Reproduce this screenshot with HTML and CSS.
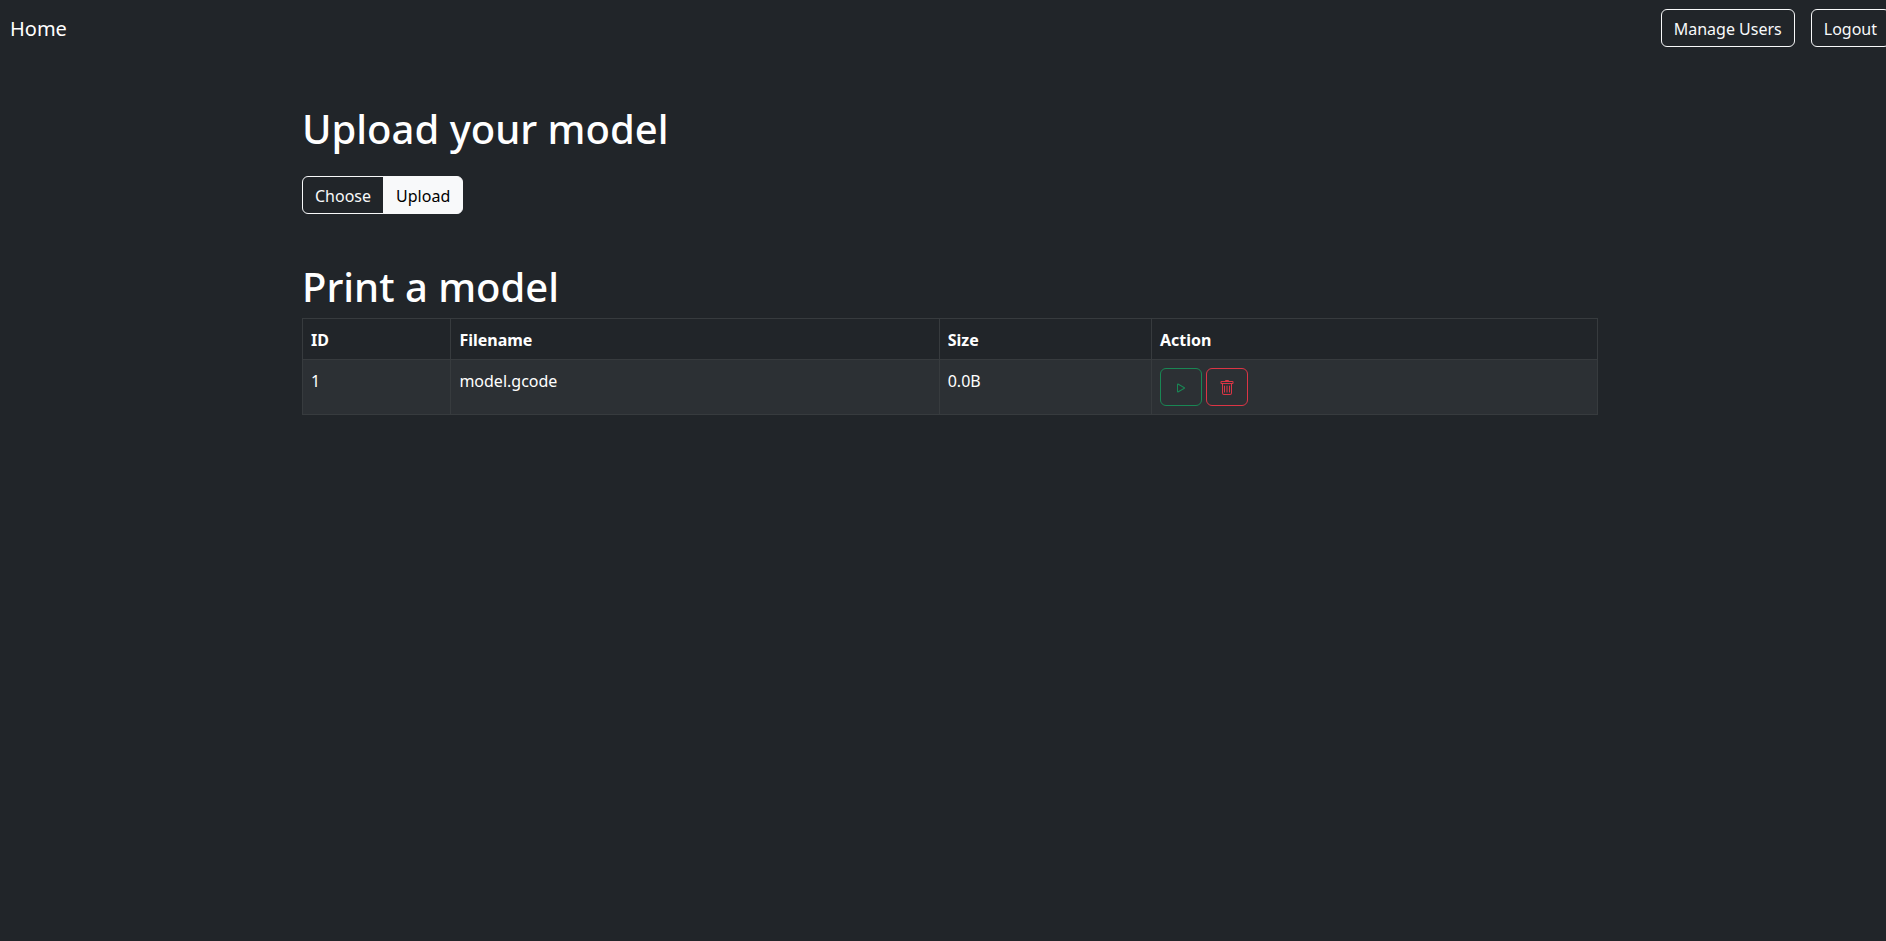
FILE: index.html
```html
<!DOCTYPE html>
<html lang="en">
<head>
<meta charset="utf-8">
<meta name="viewport" content="width=device-width, initial-scale=1">
<title>Print a model</title>
<link rel="stylesheet" href="styles.css">
</head>
<body>
<header class="navbar">
  <a class="brand" href="#">Home</a>
  <nav class="nav-actions">
    <a class="btn btn-light" href="#">Manage Users</a>
    <a class="btn btn-light" href="#">Logout</a>
  </nav>
</header>
<main class="container">
  <section class="section">
    <h1 class="title">Upload your model</h1>
    <form class="btn-group">
      <button class="btn btn-light" type="button">Choose</button>
      <button class="btn btn-solid" type="button">Upload</button>
    </form>
  </section>
  <section class="section">
    <h1 class="title">Print a model</h1>
    <table class="table">
      <thead>
        <tr><th scope="col">ID</th><th scope="col">Filename</th><th scope="col">Size</th><th scope="col">Action</th></tr>
      </thead>
      <tbody>
        <tr>
          <td>1</td>
          <td>model.gcode</td>
          <td>0.0B</td>
          <td class="actions">
            <div class="row-actions">
              <button class="btn btn-success" type="button" aria-label="Print">
                <svg class="icon" viewBox="0 0 16 16" aria-hidden="true"><path d="M10.804 8 5 4.633v6.734L10.804 8zm.792-.696a.802.802 0 0 1 0 1.392l-6.363 3.692C4.713 12.69 4 12.345 4 11.692V4.308c0-.653.713-.998 1.233-.696l6.363 3.692z"/></svg>
              </button>
              <button class="btn btn-danger" type="button" aria-label="Delete">
                <svg class="icon" viewBox="0 0 16 16" aria-hidden="true"><path d="M5.5 5.5A.5.5 0 0 1 6 6v6a.5.5 0 0 1-1 0V6a.5.5 0 0 1 .5-.5zm2.5 0a.5.5 0 0 1 .5.5v6a.5.5 0 0 1-1 0V6a.5.5 0 0 1 .5-.5zm3 .5a.5.5 0 0 0-1 0v6a.5.5 0 0 0 1 0V6z"/><path fill-rule="evenodd" d="M14.5 3a1 1 0 0 1-1 1H13v9a2 2 0 0 1-2 2H5a2 2 0 0 1-2-2V4h-.5a1 1 0 0 1-1-1V2a1 1 0 0 1 1-1H6a1 1 0 0 1 1-1h2a1 1 0 0 1 1 1h3.500a1 1 0 0 1 1 1v1zM4.118 4 4 4.059V13a1 1 0 0 0 1 1h6a1 1 0 0 0 1-1V4.059L11.882 4H4.118zM2.500 3V2h11v1h-11z"/></svg>
              </button>
            </div>
          </td>
        </tr>
      </tbody>
    </table>
  </section>
</main>
</body>
</html>
```
FILE: styles.css
```css
*, *::before, *::after { box-sizing: border-box; }

body {
  margin: 0;
  overflow-x: hidden;
  background: #212529;
  color: #fff;
  font-family: "Noto Sans", "Liberation Sans", sans-serif;
  font-size: 16px;
  line-height: 24px;
}

.navbar {
  display: flex;
  align-items: center;
  justify-content: space-between;
  margin-right: -4px;
  padding: 9px 0 9px 10px;
}

.brand {
  color: #fff;
  font-size: 20px;
  line-height: 32px;
  padding-top: 2px;
  text-decoration: none;
}

.nav-actions { display: flex; gap: 16px; }

.btn {
  display: block;
  padding: 7px 12px 5px;
  border: 1px solid;
  border-radius: 6px;
  background: transparent;
  font: inherit;
  text-decoration: none;
  white-space: nowrap;
  cursor: pointer;
}

.btn-light { color: #f8f9fa; border-color: #f8f9fa; }
.btn-solid { color: #000; background: #f8f9fa; border-color: #f8f9fa; }
.btn-success { color: #198754; border-color: #198754; }
.btn-danger { color: #dc3545; border-color: #dc3545; }

.container {
  display: flex;
  flex-direction: column;
  gap: 48px;
  max-width: 1310px;
  margin: 0 auto;
  padding: 48px 0 48px 14px;
}

.title {
  margin: 0 0 6px;
  font-size: 40px;
  font-weight: 500;
  line-height: 50px;
}

.btn-group { display: flex; margin-top: 22px; }
.btn-group .btn:first-child { border-radius: 6px 0 0 6px; }
.btn-group .btn:last-child { margin-left: -1px; border-radius: 0 6px 6px 0; }

.table { width: 100%; border-collapse: collapse; }

.table th, .table td {
  padding: 9px 8px 7px;
  border: 1px solid #373b3e;
  text-align: left;
  vertical-align: top;
}

.table th { font-weight: 700; }
.table .actions { padding: 8px; }
.table tbody tr:nth-child(odd) { background: #2c3034; }

.row-actions { display: flex; gap: 4px; }

.icon {
  display: block;
  width: 16px;
  height: 16px;
  margin: 4px 0;
  fill: currentColor;
}
```
